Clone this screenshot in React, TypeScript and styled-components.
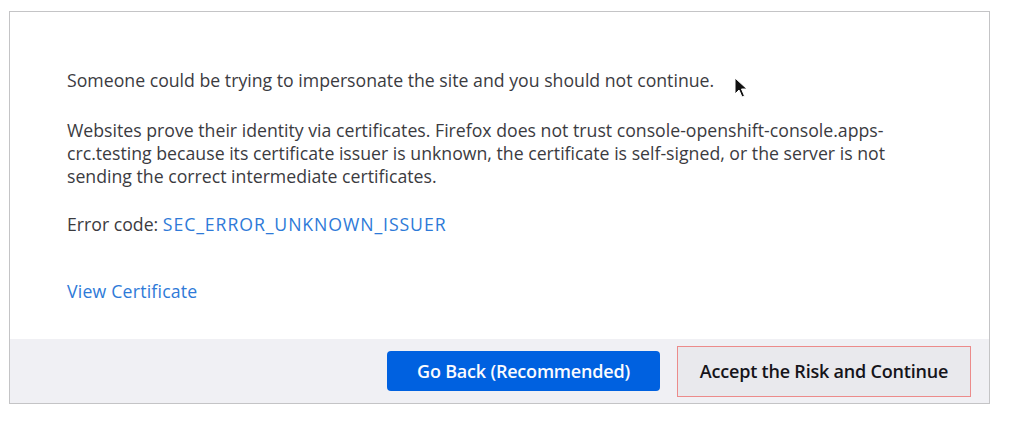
import styled, { createGlobalStyle } from 'styled-components';

const GlobalStyle = createGlobalStyle`
  html, body {
    margin: 0;
    padding: 0;
    background: #fff;
  }
  body {
    font-family: "Open Sans", "Noto Sans", sans-serif;
  }
`;

const Page = styled.div`
  width: 1024px;
  height: 432px;
  padding: 11px 0 0 9px;
  box-sizing: border-box;
  position: relative;
`;

const Panel = styled.div`
  width: 981px;
  height: 393px;
  box-sizing: border-box;
  border: 1.5px solid #c4c4c6;
  display: flex;
  flex-direction: column;
  background: #fff;
`;

const Body = styled.div`
  flex: 1;
  padding: 57px 0 0 57px;
  max-width: 850px;
  color: #3b3b3f;
  font-size: 17.7px;
  line-height: 23px;
`;

const Para = styled.p<{ $gap?: number }>`
  margin: 0 0 ${(p) => p.$gap ?? 27}px;
`;

const Link = styled.a<{ $code?: boolean }>`
  color: #2e7ad8;
  text-decoration: none;
  letter-spacing: ${(p) => (p.$code ? '0.9px' : '0.2px')};
`;

const Footer = styled.div`
  height: 64px;
  background: #f0f0f4;
  display: flex;
  align-items: center;
  justify-content: flex-end;
  gap: 17px;
  padding-right: 18px;
`;

const Button = styled.button<{ $primary?: boolean }>`
  font-family: "Open Sans", "Noto Sans", sans-serif;
  font-size: 18px;
  font-weight: 600;
  letter-spacing: -0.2px;
  border-radius: 4px;
  cursor: pointer;
  ${(p) =>
    p.$primary
      ? `
    width: 273px;
    height: 40px;
    background: #0061e0;
    color: #fbfbfe;
    border: none;
  `
      : `
    width: 294px;
    height: 51px;
    background: #e9e9ed;
    color: #15141a;
    border: 1.5px solid #ec8b8b;
    border-radius: 0;
  `}
`;

const Pointer = styled.svg`
  position: absolute;
  left: 734px;
  top: 77px;
`;

export default function App() {
  return (
    <Page>
      <GlobalStyle />
      <Panel>
        <Body>
          <Para $gap={27}>
            Someone could be trying to impersonate the site and you should not continue.
          </Para>
          <Para $gap={25}>
            Websites prove their identity via certificates. Firefox does not trust console-openshift-console.apps-crc.testing
            because its certificate issuer is unknown, the certificate is self-signed, or the server is not sending the
            correct intermediate certificates.
          </Para>
          <Para $gap={44}>
            Error code: <Link $code href="#">SEC_ERROR_UNKNOWN_ISSUER</Link>
          </Para>
          <Para $gap={0}>
            <Link href="#">View Certificate</Link>
          </Para>
        </Body>
        <Footer>
          <Button $primary>Go Back (Recommended)</Button>
          <Button>Accept the Risk and Continue</Button>
        </Footer>
      </Panel>
      <Pointer width="14" height="22" viewBox="0 0 14 22">
        <path d="M1 1 L1 17 L5 13 L8 20 L10.5 19 L7.5 12 L13 12 Z" fill="#111" stroke="#fff" strokeWidth="1" />
      </Pointer>
    </Page>
  );
}
